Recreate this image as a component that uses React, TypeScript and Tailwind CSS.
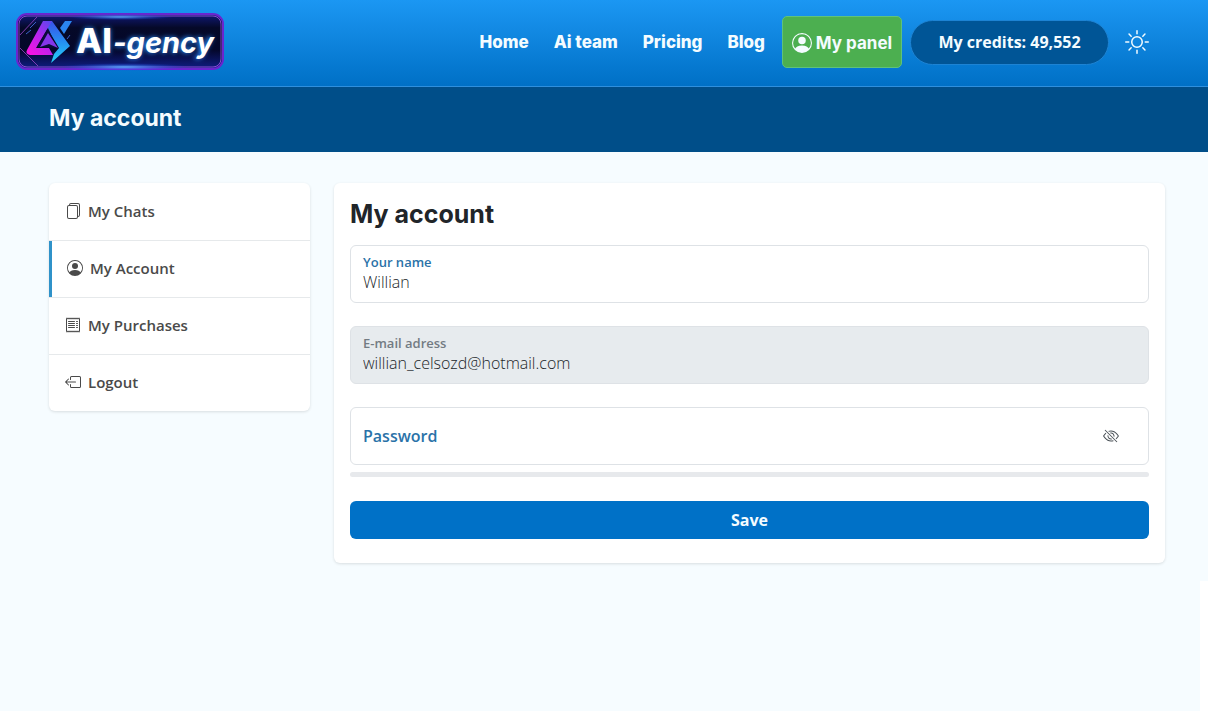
import { type ReactNode } from "react";
import {
  BsBoxArrowLeft,
  BsEyeSlash,
  BsFiles,
  BsPersonCircle,
  BsReceipt,
  BsSun,
} from "react-icons/bs";

function Logo() {
  return (
    <svg viewBox="0 0 208 58" className="h-[58px] w-[208px]" role="img" aria-label="AI-gency">
      <defs>
        <linearGradient id="plate" x1="0" y1="0" x2="0" y2="1">
          <stop offset="0" stopColor="#101a78" />
          <stop offset="0.25" stopColor="#050928" />
          <stop offset="0.65" stopColor="#04072a" />
          <stop offset="1" stopColor="#101e86" />
        </linearGradient>
        <linearGradient id="magenta" x1="0.9" y1="0" x2="0.1" y2="1">
          <stop offset="0" stopColor="#5a48f0" />
          <stop offset="0.45" stopColor="#b326ee" />
          <stop offset="1" stopColor="#fb12e2" />
        </linearGradient>
        <linearGradient id="cyan" x1="0" y1="0" x2="0" y2="1">
          <stop offset="0" stopColor="#3a50ea" />
          <stop offset="0.5" stopColor="#2590f2" />
          <stop offset="1" stopColor="#27d3f7" />
        </linearGradient>
        <radialGradient id="halo">
          <stop offset="0" stopColor="#5cb4ff" stopOpacity="0.9" />
          <stop offset="1" stopColor="#1736e8" stopOpacity="0" />
        </radialGradient>
        <filter id="glow" x="-10%" y="-40%" width="120%" height="180%">
          <feGaussianBlur stdDeviation="2.5" />
        </filter>
      </defs>
      <rect x="1" y="1" width="206" height="55" rx="10" fill="url(#plate)" stroke="#6a25cf" strokeWidth="2" />
      <rect x="3" y="3" width="202" height="51" rx="8" fill="none" stroke="#a65be8" strokeWidth="0.8" />
      <ellipse cx="104" cy="4" rx="54" ry="3" fill="url(#halo)" />
      <ellipse cx="108" cy="54" rx="66" ry="4" fill="url(#halo)" />
      <path d="M4 22 21 4M4 35l18 18" stroke="#9c48c9" strokeWidth="0.8" />
      <path d="M14 15l6-6M10 21l5-4M54 22l-3 4" stroke="#3b61c8" strokeWidth="1" />
      <path d="M49 8h7l-8 13-4-6z" fill="#2b84f0" />
      <path d="M27 8h9l18 25-19 17 3-9 5-6z" fill="url(#cyan)" />
      <path d="M27 8h9L20 35h13l4 7H14q-5-1-3-5z" fill="url(#magenta)" />
      <path d="M32 15 21 34l20 1z" fill="#0a0b3b" />
      <path d="M32 20l10 15-9-4-9 3z" fill="#8436ea" />
      <g fontFamily="Inter, sans-serif">
        <g fill="#2c8dff" filter="url(#glow)" fontWeight="800">
          <text x="60" y="40" fontSize="34">AI</text>
          <text x="97" y="40" fontSize="28" fontStyle="italic">-gency</text>
        </g>
        <g fill="#ffffff">
          <text x="60" y="40" fontSize="34" fontWeight="800">AI</text>
          <text x="97" y="40" fontSize="29" fontWeight="700" fontStyle="italic">-gency</text>
        </g>
      </g>
    </svg>
  );
}

const navLinks = ["Home", "Ai team", "Pricing", "Blog"];

function Header() {
  return (
    <header className="flex h-[87px] items-center justify-between border-b border-[#2f8fdd] bg-linear-to-b from-[#1b97f3] to-[#0070c6] pr-[59px] pb-0.5 pl-4">
      <a href="#home">
        <Logo />
      </a>
      <div className="flex items-center text-[#f4fcff]">
        <nav className="mr-[17px] flex gap-[25px] font-[Inter,sans-serif] text-[17px] leading-6 font-extrabold">
          {navLinks.map((name) => (
            <a key={name} href={"#" + name}>
              {name}
            </a>
          ))}
        </nav>
        <a
          href="#panel"
          className="mr-2 flex h-[52px] w-[120px] items-center justify-center gap-1 rounded-[5px] border border-[#5fc27a] bg-[#4caf50] pt-0.5 font-[Inter,sans-serif] text-[17px] leading-6 font-bold"
        >
          <BsPersonCircle size={20} />
          My panel
        </a>
        <a
          href="#credits"
          className="mr-4 flex h-[45px] w-[199px] items-center justify-center rounded-full border border-[#1d83d3] bg-[#005596] font-bold"
        >
          My credits: 49,552
        </a>
        <button type="button" aria-label="Toggle theme">
          <BsSun size={24} />
        </button>
      </div>
    </header>
  );
}

type MenuItemProps = { icon: ReactNode; label: string; active?: boolean };

function MenuItem({ icon, label, active }: MenuItemProps) {
  return (
    <li className="border-b border-[#e6e9eb] last:border-b-0">
      <a
        href={"#" + label}
        className={
          "flex h-14 items-center gap-[7px] pr-4 pb-0.5 text-[15px] font-semibold text-[#4a4a4a] " +
          (active ? "border-l-3 border-[#2f92c9] pl-[15px]" : "pl-4")
        }
      >
        {icon}
        {label}
      </a>
    </li>
  );
}

const fieldBox = "flex h-[58px] rounded-md border border-[#dee2e6] px-3";

export default function App() {
  return (
    <div className="flex min-h-screen flex-col bg-white font-['Open_Sans',sans-serif] text-base text-[#212529]">
      <Header />
      <div className="flex h-[65px] items-center bg-[#004e89] pb-0.5 pl-[49px]">
        <p className="font-[Inter,sans-serif] text-[23px] font-bold text-[#f4fcff]">My account</p>
      </div>
      <div className="flex flex-1">
        <div className="flex-1 bg-[#f6fcff]">
          <div className="grid grid-cols-12 items-start gap-6 pt-[31px] pr-[35px] pb-8 pl-[49px]">
            <ul className="col-span-3 overflow-hidden rounded-md bg-white pt-px shadow-[0_1px_3px_rgba(0,0,0,0.12)]">
              <MenuItem icon={<BsFiles size={16} />} label="My Chats" />
              <MenuItem icon={<BsPersonCircle size={16} />} label="My Account" active />
              <MenuItem icon={<BsReceipt size={16} />} label="My Purchases" />
              <MenuItem icon={<BsBoxArrowLeft size={16} />} label="Logout" />
            </ul>
            <main className="col-span-9 rounded-md bg-white px-4 pt-4 pb-6 shadow-[0_1px_3px_rgba(0,0,0,0.12)]">
              <h1 className="mb-4 font-[Inter,sans-serif] text-[25px] leading-[30px] font-bold">My account</h1>
              <form onSubmit={(e) => e.preventDefault()}>
                <div className={fieldBox + " mb-[23px] flex-col pt-2"}>
                  <label htmlFor="name" className="text-[13px] leading-4 font-semibold text-[#2a72a8]">
                    Your name
                  </label>
                  <input id="name" defaultValue="Willian" className="font-light leading-6 outline-none" />
                </div>
                <div className={fieldBox + " mb-[23px] flex-col bg-[#e7ebee] pt-2"}>
                  <label htmlFor="email" className="text-[13px] leading-4 font-semibold text-[#737b83]">
                    E-mail adress
                  </label>
                  <input
                    id="email"
                    type="email"
                    readOnly
                    defaultValue="willian_celsozd@hotmail.com"
                    className="font-light leading-6 outline-none"
                  />
                </div>
                <div className={fieldBox + " items-center gap-2"}>
                  <label htmlFor="password" className="font-semibold text-[#2a72a8]">
                    Password
                  </label>
                  <input id="password" type="password" className="min-w-0 flex-1 outline-none" />
                  <button type="button" aria-label="Show password" className="px-[17px] text-[#4a5157]">
                    <BsEyeSlash size={16} />
                  </button>
                </div>
                <div className="mt-[7px] mb-6 h-[5px] rounded-full bg-[#e7e9ec]" />
                <button
                  type="submit"
                  className="h-[38px] w-full rounded-md bg-[#0071c7] font-bold text-[#f4fcff]"
                >
                  Save
                </button>
              </form>
            </main>
          </div>
        </div>
        <div className="h-[429px] w-2 bg-[#f6fcff]" />
      </div>
    </div>
  );
}
